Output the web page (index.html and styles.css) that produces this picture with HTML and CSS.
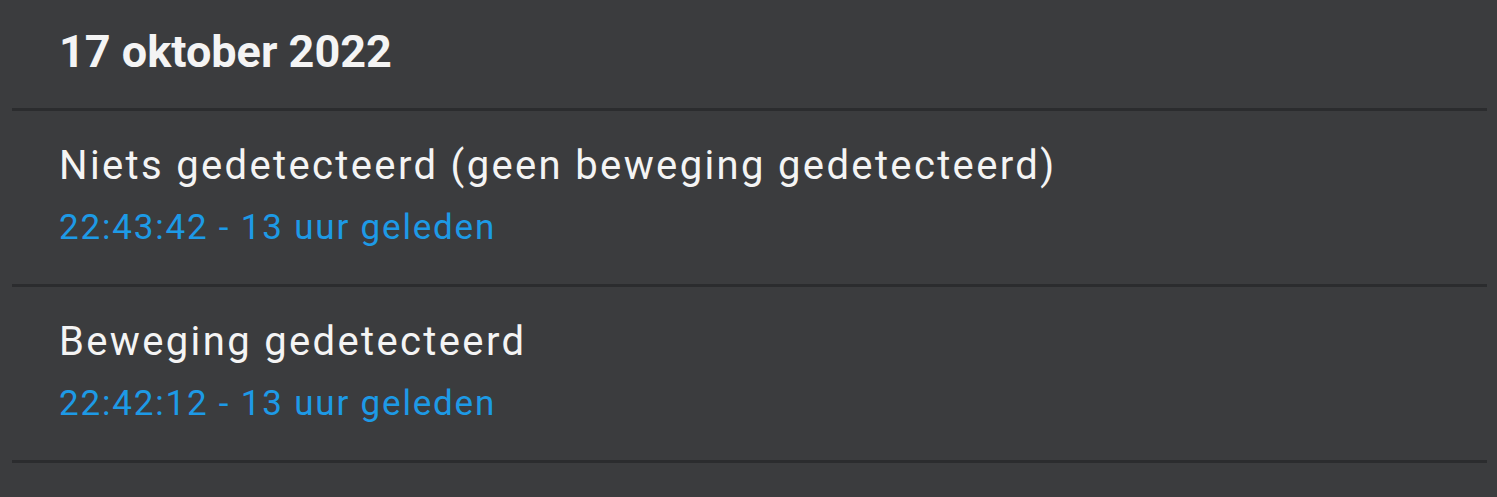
FILE: index.html
```html
<!DOCTYPE html>
<html lang="nl">
<head>
    <meta charset="UTF-8">
    <meta name="viewport" content="width=device-width, initial-scale=1.0">
    <title>Logboek</title>
    <link rel="stylesheet" href="styles.css">
</head>
<body>
    <div class="logbook">
        <div class="date-header">17 oktober 2022</div>

        <div class="entry">
            <div class="entry-message">Niets gedetecteerd (geen beweging gedetecteerd)</div>
            <div class="entry-time">22:43:42 - 13 uur geleden</div>
        </div>

        <div class="entry">
            <div class="entry-message">Beweging gedetecteerd</div>
            <div class="entry-time">22:42:12 - 13 uur geleden</div>
        </div>
    </div>
</body>
</html>
```

FILE: styles.css
```css
:root {
    --card-bg: #3b3c3e;
    --divider: #2b2c2e;
    --text: #f4f4f4;
    --accent: #1d9ae6;
}

* {
    margin: 0;
    padding: 0;
    box-sizing: border-box;
}

body {
    background-color: var(--card-bg);
    color: var(--text);
    font-family: Roboto, 'Noto Sans', sans-serif;
}

.logbook {
    margin: 0 10px 0 12px;
}

.date-header {
    padding: 25px 47px 29px;
    font-size: 45px;
    line-height: 54px;
    font-weight: 700;
    border-bottom: 3px solid var(--divider);
}

.entry {
    padding: 31px 47px 35px;
    border-bottom: 3px solid var(--divider);
}

.entry-message {
    font-size: 40px;
    line-height: 48px;
    letter-spacing: 2.35px;
}

.entry-time {
    margin-top: 17px;
    font-size: 35px;
    line-height: 42px;
    letter-spacing: 1.8px;
    color: var(--accent);
}
```
